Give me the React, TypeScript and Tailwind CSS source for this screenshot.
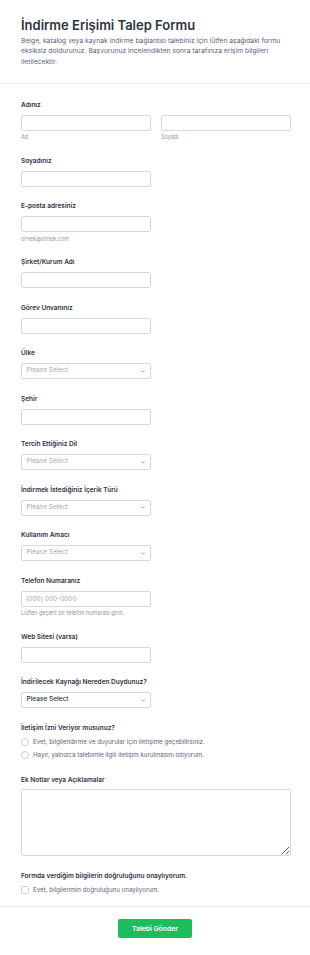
import React from "react";

const labelCls = "text-[6.5px] leading-[10px] font-semibold text-[#2c3345]";
const inputCls = "block h-[16px] w-[130px] rounded-[2px] border border-[#d3d8e2] bg-white px-[4px] text-[6.5px] text-[#2c3345] outline-none placeholder:text-[#a2a9b6]";
const subCls = "mt-[3.5px] text-[5.5px] leading-[7px] text-[#8d96a9]";

function Chevron() {
  return (
    <svg width="4" height="3" viewBox="0 0 4 3" className="shrink-0">
      <path d="M0.5 0.8 L2 2.2 L3.5 0.8" fill="none" stroke="#8a93a5" strokeWidth="0.8" strokeLinecap="round" strokeLinejoin="round" />
    </svg>
  );
}

function Select({ dark }: { dark?: boolean }) {
  return (
    <div className="flex h-[16px] w-[130px] items-center justify-between rounded-[2px] border border-[#d3d8e2] bg-white pl-[4.5px] pr-[5px]">
      <span className={dark ? "text-[6.5px] font-medium text-[#2c3345]" : "text-[6.5px] text-[#a2a9b6]"}>Please Select</span>
      <Chevron />
    </div>
  );
}

function Field({ label, children }: { label: string; children: React.ReactNode }) {
  return (
    <div className="flex flex-col">
      <div className={labelCls + " mb-[5px]"}>{label}</div>
      {children}
    </div>
  );
}

function Radio({ text }: { text: string }) {
  return (
    <div className="flex h-[13px] items-center gap-[4px]">
      <span className="h-[8px] w-[8px] shrink-0 rounded-full border border-[#c9cfda] bg-white" />
      <span className="text-[6.2px] text-[#57647e]">{text}</span>
    </div>
  );
}

export default function App() {
  return (
    <div className="min-h-[955px] w-[310px] bg-white font-['Inter',sans-serif]">
      <div className="border-b border-[#eceef3] pb-[15px] pl-[21px] pr-[10px] pt-[17px]">
        <h1 className="text-[13px] font-semibold leading-[16px] text-[#2c3345]">İndirme Erişimi Talep Formu</h1>
        <p className="mt-[2.5px] whitespace-nowrap text-[6.75px] leading-[10.7px] text-[#57647e]">
          Belge, katalog veya kaynak indirme bağlantısı talebiniz için lütfen aşağıdaki formu
          <br />
          eksiksiz doldurunuz. Başvurunuz incelendikten sonra tarafınıza erişim bilgileri
          <br />
          iletilecektir.
        </p>
      </div>

      <div className="flex flex-col gap-[14.5px] border-b border-[#eceef3] pb-[11.5px] pl-[21px] pr-[19px] pt-[16px]">
        <Field label="Adınız">
          <div className="flex gap-[10px]">
            <div className="flex flex-col">
              <input className={inputCls} />
              <div className={subCls}>Ad</div>
            </div>
            <div className="flex flex-col">
              <input className={inputCls} />
              <div className={subCls}>Soyadı</div>
            </div>
          </div>
        </Field>
        <Field label="Soyadınız">
          <input className={inputCls} />
        </Field>
        <Field label="E-posta adresiniz">
          <input className={inputCls} />
          <div className={subCls}>ornek@ornek.com</div>
        </Field>
        <Field label="Şirket/Kurum Adı">
          <input className={inputCls} />
        </Field>
        <Field label="Görev Unvanınız">
          <input className={inputCls} />
        </Field>
        <Field label="Ülke">
          <Select />
        </Field>
        <Field label="Şehir">
          <input className={inputCls} />
        </Field>
        <Field label="Tercih Ettiğiniz Dil">
          <Select />
        </Field>
        <Field label="İndirmek İstediğiniz İçerik Türü">
          <Select />
        </Field>
        <Field label="Kullanım Amacı">
          <Select />
        </Field>
        <Field label="Telefon Numaranız">
          <input className={inputCls} placeholder="(000) 000-0000" />
          <div className={subCls}>Lütfen geçerli bir telefon numarası girin.</div>
        </Field>
        <Field label="Web Sitesi (varsa)">
          <input className={inputCls} />
        </Field>
        <Field label="İndirilecek Kaynağı Nereden Duydunuz?">
          <Select dark />
        </Field>
        <div className="flex flex-col">
          <div className={labelCls + " mb-[2.5px]"}>İletişim İzni Veriyor musunuz?</div>
          <Radio text="Evet, bilgilendirme ve duyurular için iletişime geçebilirsiniz." />
          <Radio text="Hayır, yalnızca talebimle ilgili iletişim kurulmasını istiyorum." />
        </div>
        <div className="-mt-[1px] flex flex-col">
          <div className={labelCls + " mb-[4.5px]"}>Ek Notlar veya Açıklamalar</div>
          <textarea className="block h-[67px] w-[270px] resize-y rounded-[2px] border border-[#d3d8e2] bg-white outline-none" />
        </div>
        <div className="flex flex-col">
          <div className={labelCls}>Formda verdiğim bilgilerin doğruluğunu onaylıyorum.</div>
          <div className="mt-[4px] flex h-[10px] items-center gap-[4px]">
            <span className="h-[8px] w-[8px] shrink-0 rounded-[1.5px] border border-[#c9cfda] bg-white" />
            <span className="text-[6.2px] text-[#57647e]">Evet, bilgilerimin doğruluğunu onaylıyorum.</span>
          </div>
        </div>
      </div>

      <div className="flex justify-center pt-[12px]">
        <button className="h-[19px] w-[74px] rounded-[2px] bg-[#1dbd5e] text-[6.8px] font-semibold text-white">Talebi Gönder</button>
      </div>
    </div>
  );
}
